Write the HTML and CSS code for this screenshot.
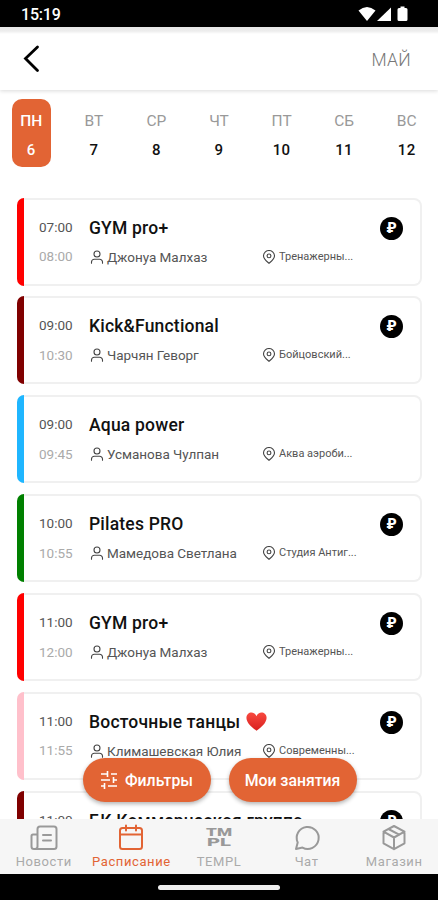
FILE: index.html
```html
<!DOCTYPE html>
<html lang="ru">
<head>
    <meta charset="UTF-8">
    <meta name="viewport" content="width=device-width, initial-scale=1.0">
    <title>Расписание</title>
    <link rel="stylesheet" href="styles.css">
</head>
<body>
    <svg class="sprite" xmlns="http://www.w3.org/2000/svg">
        <symbol id="user" viewBox="0 0 14 14">
            <circle cx="7" cy="4" r="3"/>
            <path d="M1.500 13.300v-1.200a2.800 2.800 0 0 1 2.800-2.800h5.400a2.800 2.800 0 0 1 2.800 2.800v1.200"/>
        </symbol>
        <symbol id="pin" viewBox="0 0 14 14">
            <path d="M7 13.300C4.400 11 1.500 8.700 1.500 5.900a5.500 5.400 0 0 1 11 0C12.500 8.700 9.600 11 7 13.300z"/>
            <circle cx="7" cy="5.900" r="1.900"/>
        </symbol>
    </svg>

    <div class="screen">
        <div class="status-bar">
            <span>15:19</span>
            <svg width="52" height="16" viewBox="0 0 52 16">
                <path d="M.5 4.500Q9 -2.500 17.500 4.500L9 15z"/>
                <path d="M33 1.500V15H19z"/>
                <path d="M42.500 .5h4v1.500h1.500q1.500 0 1.500 1.500v10q0 1.500-1.500 1.500h-7q-1.500 0-1.500-1.500v-10q0-1.500 1.500-1.500h1.500z"/>
            </svg>
        </div>

        <header class="header">
            <button class="back-btn">
                <svg width="18" height="28" viewBox="0 0 18 28"><path d="M15.500 2L3.500 13.500l12 12"/></svg>
            </button>
            <span class="month">МАЙ</span>
        </header>

        <div class="week">
            <div class="day active"><span class="day-name">ПН</span><span class="day-num">6</span></div>
            <div class="day"><span class="day-name">ВТ</span><span class="day-num">7</span></div>
            <div class="day"><span class="day-name">СР</span><span class="day-num">8</span></div>
            <div class="day"><span class="day-name">ЧТ</span><span class="day-num">9</span></div>
            <div class="day"><span class="day-name">ПТ</span><span class="day-num">10</span></div>
            <div class="day"><span class="day-name">СБ</span><span class="day-num">11</span></div>
            <div class="day"><span class="day-name">ВС</span><span class="day-num">12</span></div>
        </div>

        <main class="schedule">
            <div class="card red">
                <div class="time"><span>07:00</span><span class="end">08:00</span></div>
                <div class="info">
                    <div class="title">GYM pro+</div>
                    <div class="meta">
                        <span class="trainer"><svg><use href="#user"/></svg>Джонуа Малхаз</span>
                        <span class="place"><svg><use href="#pin"/></svg>Тренажерны...</span>
                    </div>
                </div>
                <span class="paid">₽</span>
            </div>

            <div class="card maroon">
                <div class="time"><span>09:00</span><span class="end">10:30</span></div>
                <div class="info">
                    <div class="title">Kick&amp;Functional</div>
                    <div class="meta">
                        <span class="trainer"><svg><use href="#user"/></svg>Чарчян Геворг</span>
                        <span class="place"><svg><use href="#pin"/></svg>Бойцовский...</span>
                    </div>
                </div>
                <span class="paid">₽</span>
            </div>

            <div class="card blue">
                <div class="time"><span>09:00</span><span class="end">09:45</span></div>
                <div class="info">
                    <div class="title">Aqua power</div>
                    <div class="meta">
                        <span class="trainer"><svg><use href="#user"/></svg>Усманова Чулпан</span>
                        <span class="place"><svg><use href="#pin"/></svg>Аква аэроби...</span>
                    </div>
                </div>
            </div>

            <div class="card green">
                <div class="time"><span>10:00</span><span class="end">10:55</span></div>
                <div class="info">
                    <div class="title">Pilates PRO</div>
                    <div class="meta">
                        <span class="trainer"><svg><use href="#user"/></svg>Мамедова Светлана</span>
                        <span class="place"><svg><use href="#pin"/></svg>Студия Антиг...</span>
                    </div>
                </div>
                <span class="paid">₽</span>
            </div>

            <div class="card red">
                <div class="time"><span>11:00</span><span class="end">12:00</span></div>
                <div class="info">
                    <div class="title">GYM pro+</div>
                    <div class="meta">
                        <span class="trainer"><svg><use href="#user"/></svg>Джонуа Малхаз</span>
                        <span class="place"><svg><use href="#pin"/></svg>Тренажерны...</span>
                    </div>
                </div>
                <span class="paid">₽</span>
            </div>

            <div class="card pink">
                <div class="time"><span>11:00</span><span class="end">11:55</span></div>
                <div class="info">
                    <div class="title">Восточные танцы
                        <svg class="heart" width="21" height="19" viewBox="0 0 21 19">
                            <defs>
                                <linearGradient id="heartFill" x1="0" y1="0" x2="0" y2="1">
                                    <stop offset="0" stop-color="#f8493f"/>
                                    <stop offset="1" stop-color="#d9201f"/>
                                </linearGradient>
                            </defs>
                            <path fill="url(#heartFill)" d="M10.500 4.200C9 .2 4.500-.4 2 1.900-.5 4.400.2 8.300 2.500 11.400 4.700 14.300 8 16.800 10.500 18.700c2.500-1.900 5.800-4.400 8-7.300 2.300-3.100 3-7 .5-9.500-2.500-2.300-7-1.700-8.500 2.300z"/>
                        </svg>
                    </div>
                    <div class="meta">
                        <span class="trainer"><svg><use href="#user"/></svg>Климашевская Юлия</span>
                        <span class="place"><svg><use href="#pin"/></svg>Современны...</span>
                    </div>
                </div>
                <span class="paid">₽</span>
            </div>

            <div class="card maroon">
                <div class="time"><span>11:00</span></div>
                <div class="info">
                    <div class="title">БК Коммерческая группа</div>
                </div>
                <span class="paid">₽</span>
            </div>
        </main>

        <div class="actions">
            <button class="action-btn">
                <svg width="18" height="20" viewBox="0 0 18 20">
                    <path d="M1 4h6.500M11 4h6M7.500 1v6M1 10h9M13.500 10H17M13.500 7v6M1 16h3.500M8 16h9M4.500 13v6"/>
                </svg>
                Фильтры
            </button>
            <button class="action-btn">Мои занятия</button>
        </div>

        <nav class="tabs">
            <a class="tab">
                <svg width="28" height="28" viewBox="0 0 28 28">
                    <path d="M10 2.500h14q2.500 0 2.500 2.500v17.500q0 2.500-2.500 2.500H4q-2.500 0-2.500-2.500V12q0-1.500 1.500-1.500h4.500M7.500 5q0-2.500 2.500-2.500M7.500 5v17.500Q7.500 25 4.500 25M13 11h8M13 16.500h8"/>
                </svg>
                Новости
            </a>
            <a class="tab active">
                <svg width="28" height="28" viewBox="0 0 28 28">
                    <path d="M5.500 4h17q2.500 0 2.500 2.500v16q0 2.500-2.500 2.500h-17Q3 25 3 22.500v-16Q3 4 5.500 4zM3 10.500h22M9 1.500v5M19 1.500v5"/>
                </svg>
                Расписание
            </a>
            <a class="tab">
                <svg class="logo" width="28" height="28" viewBox="0 0 28 28">
                    <text x="1" y="12" textLength="26" lengthAdjust="spacingAndGlyphs">TM</text>
                    <text x="2" y="21.500" textLength="24" lengthAdjust="spacingAndGlyphs">PL</text>
                </svg>
                TEMPL
            </a>
            <a class="tab">
                <svg width="28" height="28" viewBox="0 0 28 28">
                    <path d="M3 25l1.700-6.500A11 11 0 1 1 9.500 23.600z"/>
                </svg>
                Чат
            </a>
            <a class="tab">
                <svg width="28" height="28" viewBox="0 0 28 28">
                    <path d="M14 2l10.500 5.700v11.600L14 25.200 3.500 19.300V7.700zM3.500 7.700L14 13.500l10.500-5.800M14 13.500v11.700M8.500 5l10.600 5.700"/>
                </svg>
                Магазин
            </a>
        </nav>

        <div class="system-nav"><div class="home-line"></div></div>
    </div>
</body>
</html>
```
FILE: styles.css
```css
* {
    box-sizing: border-box;
}

body {
    font-family: Roboto, "Noto Sans", sans-serif;
    margin: 0;
    background-color: #fff;
    overflow: hidden;
}

button {
    font-family: inherit;
    border: none;
    background: none;
    padding: 0;
    cursor: pointer;
}

.sprite {
    position: absolute;
    width: 0;
    height: 0;
}

.screen {
    position: relative;
    display: flex;
    flex-direction: column;
    width: 438px;
    height: 900px;
    overflow: hidden;
}

.status-bar {
    display: flex;
    justify-content: space-between;
    align-items: center;
    height: 27px;
    flex-shrink: 0;
    padding: 1px 28px 0 21px;
    background-color: #000;
    color: #fff;
    font-size: 16px;
    font-weight: 500;
    letter-spacing: -0.2px;
}

.status-bar svg {
    fill: #fff;
}

.header {
    display: flex;
    justify-content: space-between;
    align-items: center;
    height: 63px;
    flex-shrink: 0;
    padding: 0 27px 0 22px;
    background: linear-gradient(#e9e9e9, #ededed 4px, #fff 7px);
    box-shadow: 0 1px 4px rgba(0, 0, 0, 0.15);
}

.back-btn svg {
    display: block;
    fill: none;
    stroke: #000;
    stroke-width: 2.8;
    stroke-linecap: round;
}

.month {
    font-size: 17.5px;
    font-weight: 300;
    letter-spacing: 0.3px;
    color: #777;
    padding-top: 2px;
}

.week {
    display: grid;
    grid-template-columns: repeat(7, 1fr);
    justify-items: center;
    height: 107px;
    flex-shrink: 0;
    padding-top: 9px;
}

.day {
    display: flex;
    flex-direction: column;
    align-items: center;
    width: 39px;
    height: 68px;
    padding-top: 12px;
    border-radius: 10px;
    line-height: 20px;
}

.day-name {
    font-size: 15.5px;
    color: #999;
}

.day-num {
    margin-top: 9px;
    font-size: 15px;
    font-weight: 500;
    letter-spacing: 0.4px;
    color: #111;
}

.day.active {
    background-color: #e26434;
}

.day.active span {
    color: #fff;
    font-weight: 500;
}

.schedule {
    flex: 1;
    min-height: 0;
    overflow: hidden;
    padding: 0.5px 16px 0 17px;
}

.card {
    display: flex;
    position: relative;
    height: 88px;
    margin-bottom: 10.9px;
    padding: 17px 17px 0 22px;
    border: 2px solid #f0f0f0;
    border-left: none;
    border-radius: 8px;
}

/* coloured strip on the left edge */
.card::before {
    content: "";
    position: absolute;
    left: 0;
    top: -2px;
    bottom: -2px;
    width: 7px;
    border-radius: 7px 0 0 7px;
}

.card.red::before { background-color: #f00; }
.card.maroon::before { background-color: #800000; }
.card.blue::before { background-color: #1fb6ff; }
.card.green::before { background-color: #008000; }
.card.pink::before { background-color: #ffc0cb; }

.time {
    display: flex;
    flex-direction: column;
    width: 50px;
    font-size: 13.5px;
    line-height: 20px;
    color: #555;
}

.time .end {
    margin-top: 9.5px;
    color: #aaa;
}

.info {
    flex: 1;
}

.title {
    display: flex;
    align-items: center;
    gap: 6px;
    font-size: 17.5px;
    line-height: 22px;
    font-weight: 500;
    letter-spacing: 0.2px;
    color: #111;
    white-space: nowrap;
}

.meta {
    display: flex;
    margin-top: 8px;
    line-height: 20px;
    color: #555;
    white-space: nowrap;
}

.meta svg {
    width: 14px;
    height: 14px;
    fill: none;
    stroke: #444;
    stroke-width: 1.1;
    stroke-linecap: round;
}

.trainer,
.place {
    display: flex;
    align-items: center;
}

.trainer {
    gap: 3px;
    width: 173px;
    padding-left: 1px;
    font-size: 13.5px;
    letter-spacing: -0.03px;
}

.place {
    gap: 3px;
    font-size: 11px;
}

.paid {
    width: 23px;
    height: 23px;
    border-radius: 50%;
    background-color: #000;
    color: #fff;
    font-size: 14px;
    font-weight: 900;
    line-height: 23px;
    text-align: center;
}

.actions {
    position: absolute;
    left: 0;
    right: 0;
    bottom: 98px;
    display: flex;
    justify-content: center;
    gap: 18px;
    padding-left: 1px;
}

.action-btn {
    display: flex;
    justify-content: center;
    align-items: center;
    gap: 7px;
    width: 128px;
    height: 44px;
    border-radius: 22px;
    background-color: #e26434;
    box-shadow: 0 2px 4px rgba(0, 0, 0, 0.3);
    color: #fff;
    font-size: 15.8px;
    font-weight: 500;
}

.action-btn svg {
    fill: none;
    stroke: #fff;
    stroke-width: 1.6;
}

.tabs {
    display: grid;
    grid-template-columns: repeat(5, 1fr);
    height: 55px;
    flex-shrink: 0;
    background-color: #f6f6f6;
}

.tab {
    display: flex;
    flex-direction: column;
    align-items: center;
    padding-top: 5px;
    font-size: 13px;
    line-height: 20px;
    letter-spacing: 0.6px;
    color: #aaa;
}

.tab svg {
    fill: none;
    stroke: #999;
    stroke-width: 2;
    stroke-linejoin: round;
    stroke-linecap: round;
}

.tab .logo {
    fill: #999;
    stroke: none;
    font-size: 10px;
    font-weight: 900;
    letter-spacing: 0;
}

.tab.active {
    color: #e26434;
}

.tab.active svg {
    stroke: #e26434;
}

.system-nav {
    display: flex;
    justify-content: center;
    height: 26px;
    flex-shrink: 0;
    padding-top: 11px;
    background-color: #000;
}

.home-line {
    width: 122px;
    height: 5px;
    border-radius: 3px;
    background-color: #eee;
}
```
